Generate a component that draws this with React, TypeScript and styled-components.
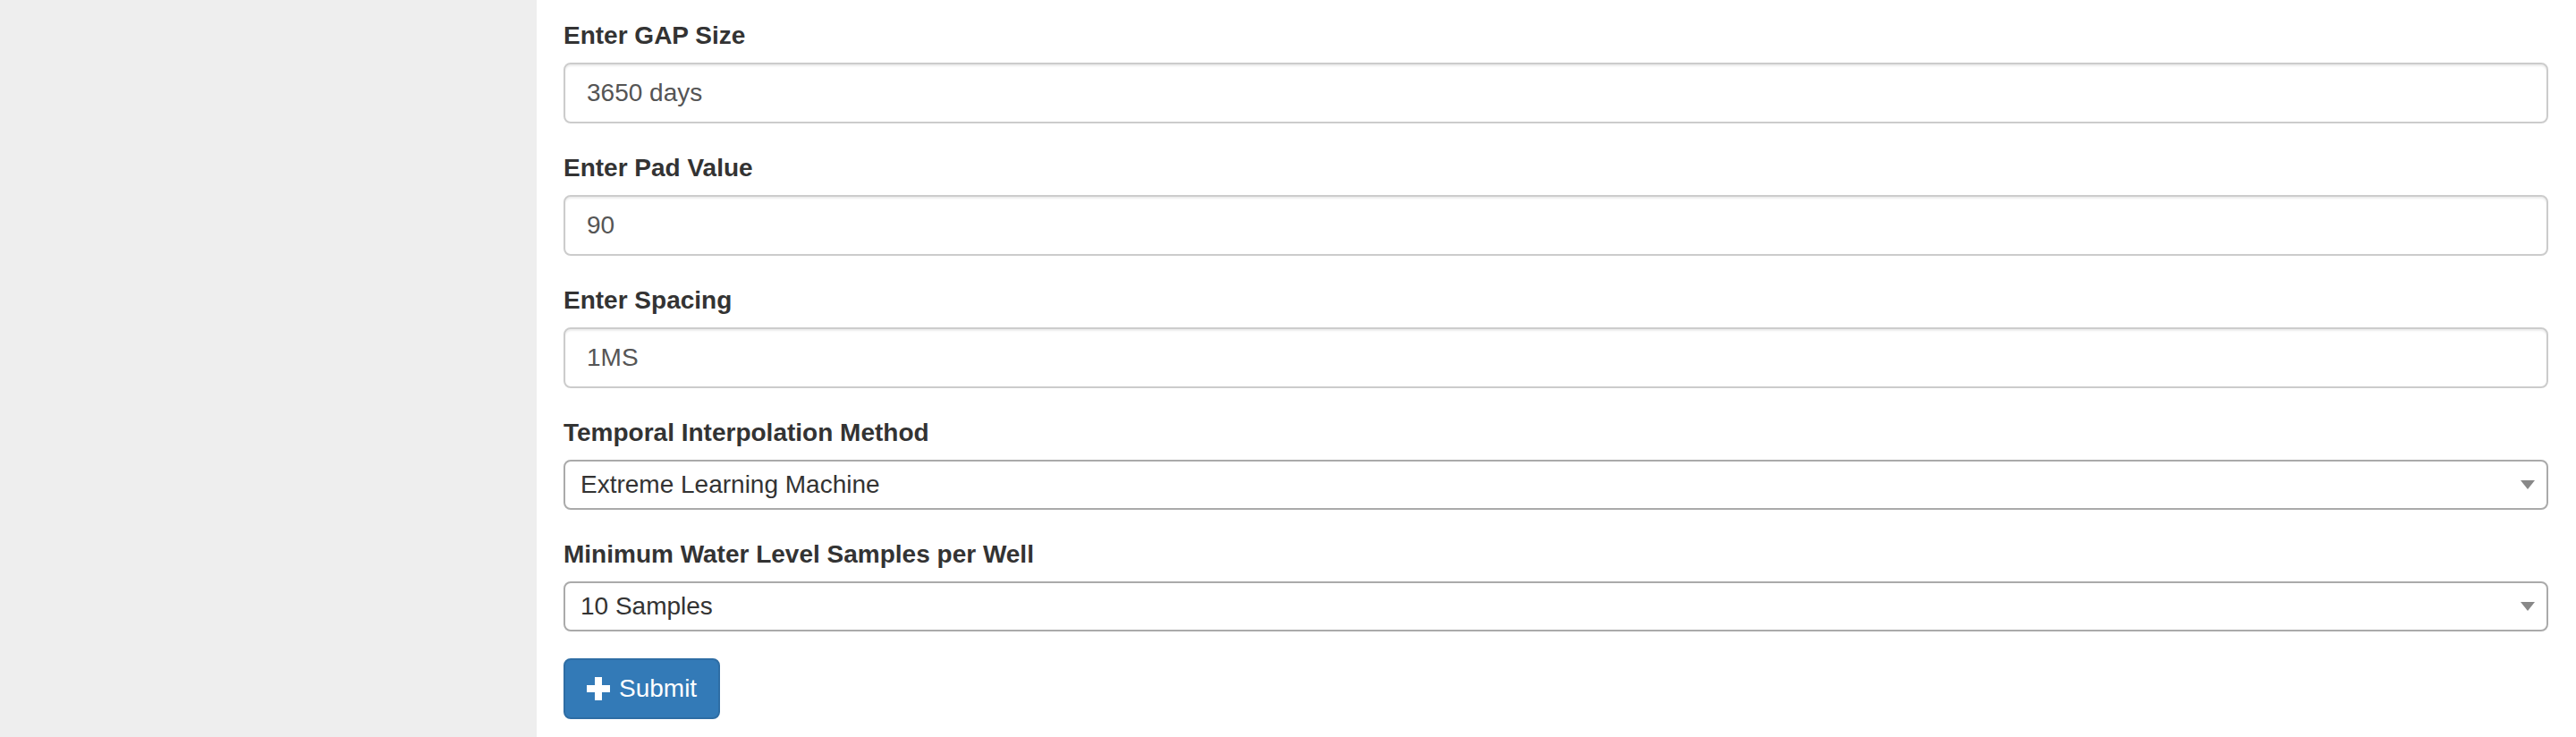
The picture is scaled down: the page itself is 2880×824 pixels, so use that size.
import React from "react";
import styled, { createGlobalStyle } from "styled-components";

const GlobalStyle = createGlobalStyle`
  html, body {
    margin: 0;
    padding: 0;
    background: #ffffff;
  }
  body {
    font-family: "Liberation Sans", Arial, Helvetica, sans-serif;
    font-size: 28px;
    line-height: 40px;
    color: #333333;
  }
  * { box-sizing: border-box; }
`;

const Page = styled.div`
  display: grid;
  grid-template-columns: 600px 1fr;
  min-height: 100vh;
`;

const Sidebar = styled.aside`
  background: #eeeeee;
`;

const Main = styled.main`
  padding: 20px 31px 0 30px;
`;

const Form = styled.form`
  display: flex;
  flex-direction: column;
`;

const FormGroup = styled.div`
  display: flex;
  flex-direction: column;
  margin-bottom: 30px;
`;

const Label = styled.label`
  display: block;
  font-weight: 700;
  font-size: 28px;
  line-height: 40px;
  margin-bottom: 10px;
  color: #333333;
`;

const TextInput = styled.input`
  display: block;
  width: 100%;
  height: 68px;
  padding: 12px 24px;
  font-family: "Liberation Sans", Arial, Helvetica, sans-serif;
  font-size: 28px;
  line-height: 40px;
  color: #555555;
  background: #ffffff;
  border: 2px solid #cccccc;
  border-radius: 8px;
  box-shadow: inset 0 2px 2px rgba(0, 0, 0, 0.075);
  outline: none;
`;

const SelectBox = styled.div`
  display: flex;
  align-items: center;
  justify-content: space-between;
  width: 100%;
  height: 56px;
  padding: 0 13px 0 17px;
  font-size: 28px;
  line-height: 40px;
  color: #333333;
  background: #ffffff;
  border: 2px solid #aaaaaa;
  border-radius: 8px;
`;

const SelectValue = styled.span`
  white-space: nowrap;
`;

const Arrow = styled.svg`
  width: 16px;
  height: 10px;
  flex: none;
`;

const SubmitButton = styled.button`
  display: inline-flex;
  align-items: center;
  align-self: flex-start;
  gap: 10px;
  height: 68px;
  padding: 12px 24px;
  font-family: "Liberation Sans", Arial, Helvetica, sans-serif;
  font-size: 28px;
  line-height: 40px;
  color: #ffffff;
  background: #337ab7;
  border: 2px solid #2e6da4;
  border-radius: 8px;
  cursor: pointer;
`;

const PlusIcon = styled.svg`
  width: 26px;
  height: 26px;
  flex: none;
`;

const Select: React.FC<{ value: string }> = ({ value }) => (
  <SelectBox role="combobox">
    <SelectValue>{value}</SelectValue>
    <Arrow viewBox="0 0 16 10">
      <path d="M0 0 H16 L8 10 Z" fill="#888888" />
    </Arrow>
  </SelectBox>
);

export default function App() {
  return (
    <>
      <GlobalStyle />
      <Page>
        <Sidebar />
        <Main>
          <Form onSubmit={(e) => e.preventDefault()}>
            <FormGroup>
              <Label>Enter GAP Size</Label>
              <TextInput defaultValue="3650 days" />
            </FormGroup>
            <FormGroup>
              <Label>Enter Pad Value</Label>
              <TextInput defaultValue="90" />
            </FormGroup>
            <FormGroup>
              <Label>Enter Spacing</Label>
              <TextInput defaultValue="1MS" />
            </FormGroup>
            <FormGroup>
              <Label>Temporal Interpolation Method</Label>
              <Select value="Extreme Learning Machine" />
            </FormGroup>
            <FormGroup>
              <Label>Minimum Water Level Samples per Well</Label>
              <Select value="10 Samples" />
            </FormGroup>
            <SubmitButton type="submit">
              <PlusIcon viewBox="0 0 26 26">
                <path d="M9 0 H17 V9 H26 V17 H17 V26 H9 V17 H0 V9 H9 Z" fill="#ffffff" />
              </PlusIcon>
              Submit
            </SubmitButton>
          </Form>
        </Main>
      </Page>
    </>
  );
}
